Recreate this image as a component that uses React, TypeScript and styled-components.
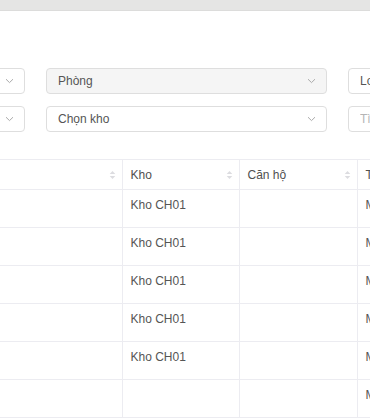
import { ReactElement } from 'react'
import styled, { createGlobalStyle } from 'styled-components'

const GlobalStyle = createGlobalStyle`
  html, body {
    margin: 0;
    padding: 0;
    background: #fff;
    font-family: 'Liberation Sans', Arial, sans-serif;
    overflow: hidden;
  }
`

const Page = styled.div`
  width: 370px;
  height: 418px;
  overflow: hidden;
  background: #fff;
`

const TopBar = styled.div`
  height: 10px;
  background: #e5e5e4;
  border-bottom: 1px solid #dcdcdb;
`

const Filters = styled.div`
  display: grid;
  grid-template-columns: repeat(3, 281px);
  column-gap: 21px;
  row-gap: 12px;
  margin: 57px 0 0 -256px;
`

const Field = styled.div<{ $disabled?: boolean }>`
  height: 26px;
  box-sizing: border-box;
  border: 1px solid #dedede;
  border-radius: 4px;
  background: ${({ $disabled }): string => ($disabled ? '#f5f5f5' : '#fff')};
  display: flex;
  align-items: center;
  padding: 0 10px 0 11px;
  font-size: 12px;
`

const FieldText = styled.span<{ $placeholder?: boolean }>`
  flex: 1;
  color: ${({ $placeholder }): string => ($placeholder ? '#b5b5b5' : '#555')};
  white-space: nowrap;
  overflow: hidden;
`

const Chevron = (): ReactElement => (
  <svg width="9" height="6" viewBox="0 0 9 6" fill="none">
    <path d="M1 1.2 L4.5 4.6 L8 1.2" stroke="#aaa" strokeWidth="1" />
  </svg>
)

const TableWrap = styled.div`
  margin: 27px 0 0 -83px;
`

const Table = styled.table`
  width: 560px;
  border-collapse: collapse;
  table-layout: fixed;
  font-size: 12px;
  color: #555;
`

const HeadCell = styled.th<{ $w: number }>`
  width: ${({ $w }): number => $w}px;
  height: 30px;
  box-sizing: border-box;
  padding: 0 6px 0 8px;
  text-align: left;
  font-weight: normal;
  color: #505050;
  border-top: 1px solid #ececf1;
  border-bottom: 1px solid #ececf1;
  border-right: 1px solid #ececf1;
  white-space: nowrap;
  overflow: hidden;
`

const HeadInner = styled.div`
  display: flex;
  align-items: center;
  justify-content: space-between;
`

const Cell = styled.td`
  height: 38px;
  box-sizing: border-box;
  padding: 8px 8px 0;
  vertical-align: top;
  border-bottom: 1px solid #ececf1;
  border-right: 1px solid #ececf1;
  white-space: nowrap;
  overflow: hidden;
`

const SortIcon = (): ReactElement => (
  <svg width="7" height="10" viewBox="0 0 7 10">
    <path d="M3.5 1 L6.3 4 L0.7 4 Z" fill="#dcdce0" />
    <path d="M3.5 9 L6.3 6 L0.7 6 Z" fill="#dcdce0" />
  </svg>
)

const columns = [
  { title: 'Tên', w: 205 },
  { title: 'Kho', w: 117 },
  { title: 'Căn hộ', w: 118 },
  { title: 'Trạng thái', w: 120 },
]

const rows = [
  ['Máy lạnh', 'Kho CH01', '', 'Mới'],
  ['Máy lạnh', 'Kho CH01', '', 'Mới'],
  ['Máy lạnh', 'Kho CH01', '', 'Mới'],
  ['Máy lạnh', 'Kho CH01', '', 'Mới'],
  ['Máy lạnh', 'Kho CH01', '', 'Mới'],
  ['Máy lạnh', '', '', 'Mới'],
]

const App = (): ReactElement => {
  return (
    <Page>
      <GlobalStyle />
      <TopBar />
      <Filters>
        <Field>
          <FieldText>Tòa nhà</FieldText>
          <Chevron />
        </Field>
        <Field $disabled>
          <FieldText>Phòng</FieldText>
          <Chevron />
        </Field>
        <Field>
          <FieldText>Loại tài sản</FieldText>
          <Chevron />
        </Field>
        <Field>
          <FieldText>Trạng thái</FieldText>
          <Chevron />
        </Field>
        <Field>
          <FieldText>Chọn kho</FieldText>
          <Chevron />
        </Field>
        <Field>
          <FieldText $placeholder>Tìm kiếm</FieldText>
        </Field>
      </Filters>
      <TableWrap>
        <Table>
          <thead>
            <tr>
              {columns.map((c) => (
                <HeadCell key={c.title} $w={c.w}>
                  <HeadInner>
                    <span>{c.title}</span>
                    <SortIcon />
                  </HeadInner>
                </HeadCell>
              ))}
            </tr>
          </thead>
          <tbody>
            {rows.map((r, i) => (
              <tr key={i}>
                {r.map((v, j) => (
                  <Cell key={j}>{v}</Cell>
                ))}
              </tr>
            ))}
          </tbody>
        </Table>
      </TableWrap>
    </Page>
  )
}

export default App
